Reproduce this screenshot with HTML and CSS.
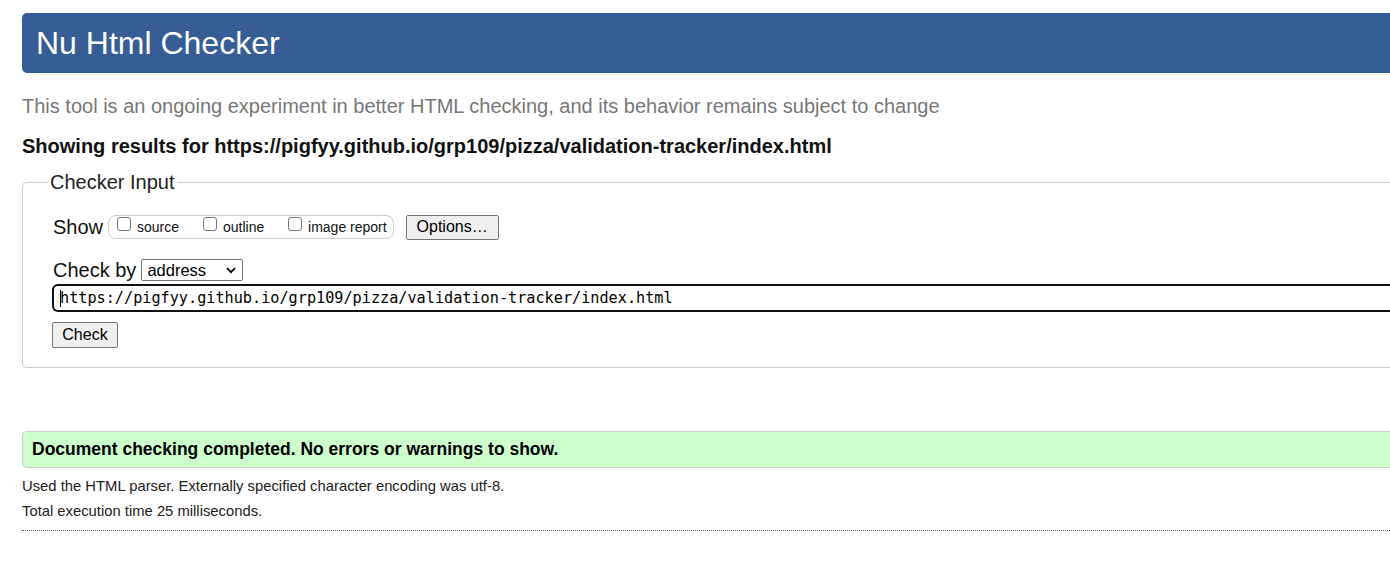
FILE: index.html
```html
<!DOCTYPE html>
<html>
<head>
<meta charset="utf-8">
<title>Nu Html Checker</title>
<link rel="stylesheet" href="styles.css">
</head>
<body>
<div class="page">
  <h1 class="banner">Nu Html Checker</h1>
  <p class="intro">This tool is an ongoing experiment in better HTML checking, and its behavior remains subject to change</p>
  <p class="showing">Showing results for https://pigfyy.github.io/grp109/pizza/validation-tracker/index.html</p>
  <fieldset class="input-box">
    <legend class="legend">Checker Input</legend>
    <div class="row show-row">
      <span class="label">Show</span>
      <span class="options-group">
        <label class="opt"><span class="cb"></span>source</label>
        <label class="opt"><span class="cb"></span>outline</label>
        <label class="opt"><span class="cb"></span>image report</label>
      </span>
      <button class="btn btn-options" type="button">Options…</button>
    </div>
    <div class="row by-row">
      <span class="label">Check by</span>
      <span class="select">address
        <svg class="chev" width="10" height="7" viewBox="0 0 10 7"><path d="M1 1.2 L5 5.2 L9 1.2" fill="none" stroke="#000" stroke-width="1.8"/></svg>
      </span>
    </div>
    <div class="url-field"><span class="caret"></span>https://pigfyy.github.io/grp109/pizza/validation-tracker/index.html</div>
    <button class="btn btn-check" type="button">Check</button>
  </fieldset>
  <div class="success">Document checking completed. No errors or warnings to show.</div>
  <p class="details">Used the HTML parser. Externally specified character encoding was utf-8.</p>
  <p class="details">Total execution time 25 milliseconds.</p>
  <hr class="rule">
</div>
</body>
</html>
```
FILE: styles.css
```css
html, body {
  margin: 0;
  padding: 0;
  overflow: hidden;
  background: #fff;
}
body {
  font-family: "Liberation Sans", Arial, sans-serif;
  color: #111;
}
.page {
  padding: 13px 0 0 22px;
  width: 1420px;
}
.banner {
  margin: 0;
  height: 60px;
  box-sizing: border-box;
  padding: 12px 0 0 14px;
  background: #365d95;
  color: #fff;
  font-weight: normal;
  font-size: 32px;
  line-height: 36px;
  border-radius: 5px 0 0 5px;
}
.intro {
  margin: 20px 0 0 0;
  font-size: 20px;
  line-height: 26px;
  color: #777;
}
.showing {
  margin: 14px 0 0 0;
  font-size: 20px;
  line-height: 26px;
  font-weight: bold;
  color: #111;
}
.input-box {
  margin: 11px 0 0 0;
  border: 1px solid #ccc;
  border-right: none;
  border-radius: 5px 0 0 5px;
  padding: 0 0 19px 30px;
  min-inline-size: 0;
}
.legend {
  font-size: 20px;
  color: #222;
  padding: 0 2px;
  margin-left: -5px;
  line-height: 24px;
}
.row {
  display: flex;
  align-items: center;
}
.show-row {
  height: 26px;
  margin-top: 20px;
}
.label {
  font-size: 20px;
  color: #111;
}
.options-group {
  display: flex;
  align-items: center;
  margin-left: 5px;
  height: 24px;
  box-sizing: border-box;
  border: 1px solid #ccc;
  border-radius: 8px;
  padding: 0 6px 0 8px;
  white-space: nowrap;
}
.opt {
  display: flex;
  align-items: center;
  font-size: 14px;
  color: #111;
  white-space: nowrap;
}
.opt:nth-child(1) { width: 86px; }
.opt:nth-child(2) { width: 85px; }
.cb {
  display: inline-block;
  flex: none;
  width: 14px;
  height: 14px;
  border: 1px solid #767676;
  border-radius: 3px;
  box-sizing: border-box;
  margin: -6px 6px 0 0;
}
.btn {
  font-family: "Liberation Sans", Arial, sans-serif;
  font-size: 16px;
  color: #000;
  background: #efefef;
  border: 1px solid #767676;
  border-radius: 2px;
  padding: 0 9px;
  line-height: 22px;
}
.btn-options {
  margin-left: 12px;
  width: 93px;
  height: 25px;
}
.by-row {
  margin-top: 18px;
  height: 24px;
}
.select {
  display: flex;
  align-items: center;
  justify-content: space-between;
  margin-left: 5px;
  width: 102px;
  height: 22px;
  box-sizing: border-box;
  border: 1px solid #767676;
  border-radius: 2px;
  padding: 0 6px 0 5px;
  font-size: 16.5px;
  color: #000;
}
.chev { margin-top: 1px; }
.url-field {
  margin-top: 2px;
  margin-left: -1px;
  height: 28px;
  box-sizing: border-box;
  border: 2px solid #111;
  border-right: none;
  border-radius: 6px 0 0 6px;
  padding: 0 0 0 6px;
  font-family: "DejaVu Sans Mono", monospace;
  font-size: 15.2px;
  line-height: 24px;
  color: #000;
  display: flex;
  align-items: center;
  white-space: nowrap;
}
.caret {
  display: inline-block;
  width: 1px;
  height: 17px;
  background: #000;
  margin-right: -1px;
}
.btn-check {
  display: block;
  margin-top: 10px;
  margin-left: -1px;
  width: 66px;
  height: 26px;
}
.success {
  margin-top: 63px;
  height: 37px;
  box-sizing: border-box;
  background: #ccffcc;
  border: 1px solid #ccc;
  border-right: none;
  border-radius: 5px 0 0 5px;
  padding: 0 0 0 9px;
  font-weight: bold;
  font-size: 17.5px;
  line-height: 34px;
  color: #000;
}
.details {
  margin: 0;
  font-size: 14.8px;
  line-height: 25px;
  color: #222;
}
.success + .details { margin-top: 6px; }
.rule {
  margin: 6px 0 0 0;
  border: none;
  border-top: 1px dotted #666;
  height: 0;
}
```
